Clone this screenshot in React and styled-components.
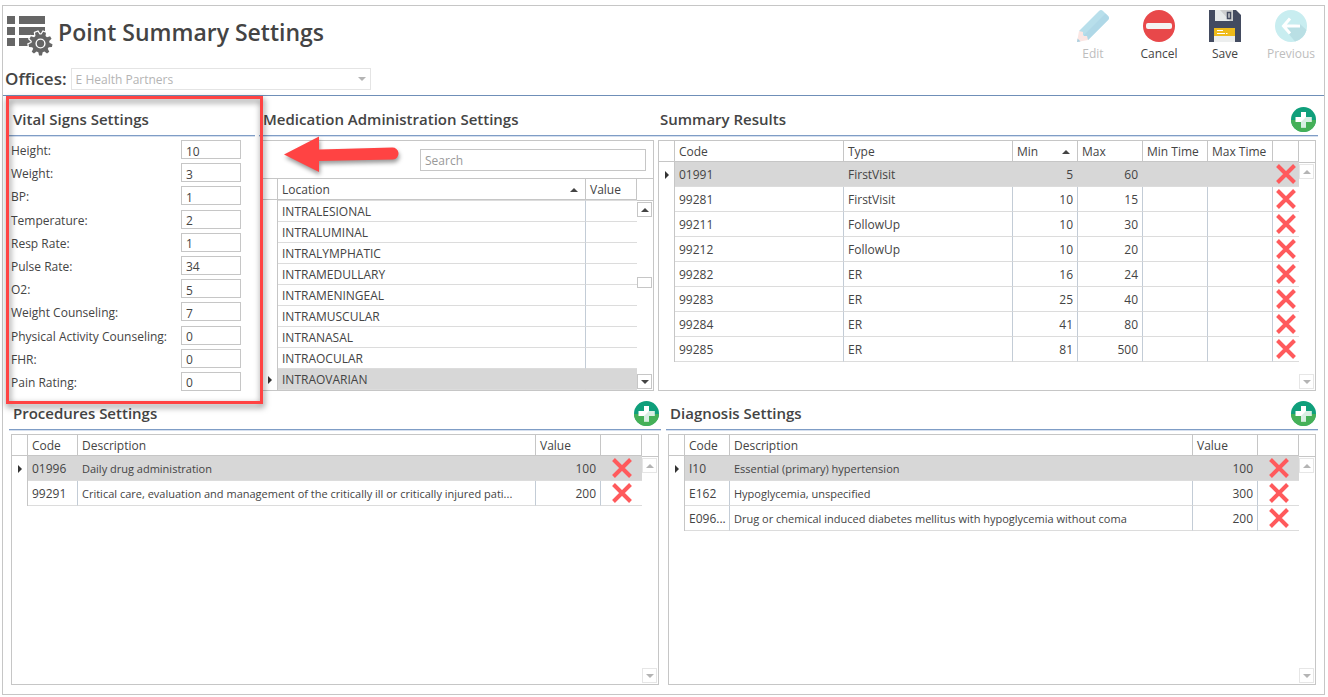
import React from "react"
import styled, { createGlobalStyle, css } from "styled-components"

const ink = "#444444"
const line = "#c6c6c6"
const rowLine = "#dcdcdc"
const cellLine = "#c3ccd6"
const selected = "#d7d7d7"
const blue = "#7f9dc6"
const red = "#ff4343"

const GlobalStyle = createGlobalStyle`
  * {
    box-sizing: border-box;
  }

  body {
    margin: 0;
    background: #ffffff;
    color: ${ink};
    font-family: "Open Sans", "Noto Sans", sans-serif;
    font-size: 12px;
    line-height: 16px;
  }

  button,
  input,
  select {
    font: inherit;
    color: inherit;
  }
`

const Page = styled.div`
  display: flex;
  min-height: 100vh;
  padding: 5px 3px 2px 2px;
`

const Frame = styled.div`
  flex: 1;
  min-width: 0;
  display: flex;
  flex-direction: column;
  border: 1px solid ${line};
`

const Header = styled.header`
  display: flex;
  justify-content: space-between;
  height: 90px;
  border-bottom: 1px solid #6f8fb8;
`

const Brand = styled.div`
  display: flex;
  align-items: flex-start;
  gap: 5px;
  height: 62px;
  padding: 10px 4px 0;
`

const Title = styled.h1`
  margin: 0;
  font-size: 23px;
  line-height: 32px;
  font-weight: 600;
`

const Offices = styled.div`
  display: flex;
  align-items: center;
  gap: 4px;
  padding-left: 2px;

  label {
    font-size: 17px;
    line-height: 22px;
    font-weight: 600;
  }
`

const SelectWrap = styled.div`
  display: flex;
  align-items: center;
  width: 300px;
  height: 22px;
  padding-right: 4px;
  border: 1px solid #e4e4e4;
  color: #b4b4b4;

  select {
    flex: 1;
    appearance: none;
    height: 20px;
    padding: 2px 4px 0;
    border: 0;
    background: none;
    opacity: 1;
  }
`

const Toolbar = styled.div`
  display: flex;
  padding-top: 4px;
`

const ToolButton = styled.button`
  display: flex;
  flex-direction: column;
  align-items: center;
  gap: 4px;
  width: 66px;
  height: 56px;
  padding: 0;
  border: 0;
  background: none;

  &:disabled {
    color: #bdbdbd;
  }
`

const Body = styled.main`
  flex: 1;
  display: flex;
  flex-direction: column;
  padding: 1px 6px 9px;
`

const TopRow = styled.div`
  display: grid;
  grid-template-columns: 250fr 397fr 662fr;
`

const BottomRow = styled.div`
  flex: 1;
  display: grid;
  grid-template-columns: 1fr 1fr;
  gap: 5px;
`

const Panel = styled.section`
  position: relative;
  display: flex;
  flex-direction: column;
  min-width: 0;
  margin-right: ${props => (props.$spaced ? "4px" : 0)};
`

const PanelHead = styled.div`
  display: flex;
  align-items: center;
  justify-content: space-between;
  height: 40px;
  margin-bottom: 3px;
  padding: 5px 2px 0 4px;
  border-bottom: 1px solid #d5dfee;
  box-shadow: inset 0 -1px 0 ${blue};

  h2 {
    margin: 0;
    font-size: 15px;
    line-height: 20px;
    font-weight: 600;
    white-space: nowrap;
  }
`

const IconButton = styled.button`
  display: flex;
  justify-content: center;
  align-items: center;
  padding: 0;
  border: 0;
  background: none;
`

const GridBox = styled.div`
  flex: 1;
  display: flex;
  flex-direction: column;
  margin: 0 2px;
  border: 1px solid ${line};
`

const GridBody = styled.div`
  flex: 1;
  display: flex;
`

const TableArea = styled.div`
  flex: 1;
  min-width: 0;
`

const Table = styled.table`
  width: 100%;
  table-layout: fixed;
  border-spacing: 0;
`

const Th = styled.th`
  width: ${props => (props.$width ? props.$width + "px" : "auto")};
  height: 21px;
  padding: 2px 4px 0;
  border-right: 1px solid ${line};
  border-bottom: 1px solid ${line};
  font-weight: 400;
  text-align: left;
  white-space: nowrap;
`

const ThLabel = styled.div`
  display: flex;
  align-items: center;
  justify-content: space-between;
  padding-right: 3px;
`

const Row = styled.tr`
  ${props =>
    props.$selected &&
    css`
      td:not(:first-child) {
        background: ${selected};
        border-right-color: ${selected};
      }
    `}
`

const Td = styled.td`
  height: ${props => (props.$dense ? "21px" : "25px")};
  padding: ${props => (props.$number ? "2px 4px 0" : "2px 0 0 4px")};
  border-right: 1px solid ${cellLine};
  border-bottom: 1px solid ${rowLine};
  font-size: ${props => (props.$small ? "11px" : "12px")};
  text-align: ${props => (props.$number ? "right" : "left")};
  overflow: hidden;
  text-overflow: ellipsis;
  white-space: nowrap;
`

const ActionCell = styled.td`
  padding: 0;
  border-bottom: 1px solid ${rowLine};

  button {
    width: 100%;
  }
`

const Marker = styled.td`
  padding: 0;
  border-right: 1px solid ${line};

  svg {
    display: block;
    margin: 0 auto;
  }
`

const DenseTable = styled(Table)`
  tbody tr:first-child td:not(:first-child) {
    height: 22px;
    border-top: 1px solid ${rowLine};
  }

  tbody td:last-child {
    border-right: 0;
  }
`

const Rail = styled.div`
  display: flex;
  flex-direction: column;
  align-items: flex-start;
  width: 16px;
  padding-bottom: 1px;

  &::before {
    content: "";
    width: 16px;
    height: 21px;
    margin-bottom: 1px;
    border-bottom: 1px solid ${line};
  }
`

const RailTrack = styled.div`
  flex: 1;
  display: flex;
  flex-direction: column;
`

const RailSpace = styled.div`
  flex: ${props => props.$grow};
`

const RailThumb = styled.div`
  width: 15px;
  height: 11px;
  border: 1px solid ${line};
  background: #ffffff;
`

const RailButton = styled(IconButton)`
  width: 15px;
  height: 15px;
  border: 1px solid ${line};
  background: #ffffff;

  &:disabled {
    border-color: #e6e6e6;
  }
`

const SearchBar = styled.div`
  display: flex;
  justify-content: flex-end;
  padding: 8px 7px 7px;
  border-bottom: 1px solid ${line};
`

const SearchInput = styled.input`
  width: 226px;
  height: 22px;
  padding: 1px 4px 0;
  border: 1px solid ${line};
  border-radius: 0;

  &::placeholder {
    color: #999999;
    opacity: 1;
  }
`

const VitalList = styled.div`
  flex: 1;
  display: flex;
  flex-direction: column;
  justify-content: space-between;
  padding: 0 14px 0 2px;
`

const VitalRow = styled.div`
  display: flex;
  align-items: center;
  justify-content: space-between;

  label {
    padding-top: 2px;
    line-height: 17px;
  }

  input {
    width: 60px;
    height: 19px;
    padding: 3px 4px 0;
    border: 1px solid ${line};
    border-radius: 0;
  }
`

const Highlight = styled.div`
  position: absolute;
  z-index: 2;
  inset: -1px -8px -13px -3px;
  border: 3px solid ${red};
  filter: drop-shadow(1px 3px 3px rgba(0, 0, 0, 0.55));
  pointer-events: none;
`

const Pointer = styled.svg`
  position: absolute;
  z-index: 2;
  top: 36px;
  left: 20px;
  filter: drop-shadow(1px 3px 2px rgba(0, 0, 0, 0.4));
  pointer-events: none;
`

// nine teeth, four points each
const gearPoints = Array.from({ length: 36 }, (_, i) => {
  const outer = i % 4 < 2
  const radius = outer ? 12 : 9
  const spread = outer ? 2 : 1
  const angle = ((i * 10 + 5 + (i % 2 ? spread : -spread)) * Math.PI) / 180
  return `${33.5 + radius * Math.cos(angle)},${27.5 + radius * Math.sin(angle)}`
}).join(" ")

const SettingsIcon = () => (
  <svg width="46" height="40" viewBox="0 0 46 40" fill="#666666" aria-hidden="true">
    <path d="M0 0h8v8H0zM12 0h26v8H12zM0 11h8v8H0zM12 11h26v8H12zM0 22h8v8H0zM12 22h13v8H12z" />
    <polygon points={gearPoints} stroke="#ffffff" strokeWidth="2.4" />
    <polygon points={gearPoints} />
    <circle cx="33.5" cy="27.5" r="4.4" fill="none" stroke="#ffffff" strokeWidth="1.4" />
  </svg>
)

const EditIcon = () => (
  <svg width="32" height="32" viewBox="0 0 32 32" aria-hidden="true">
    <path d="M2 21 22 1q2-2 4 0l5 5q2 2 0 4L11 30z" fill="#b8dfeb" />
    <path d="M6.5 25.5 28.5 3.5 31 6q2 2 0 4L11 30z" fill="#afd8e7" />
    <path d="M2 21 0 32l11-2-1-4-4 0 0-4z" fill="#fbe6e3" />
    <path d="M0 32l.6-3.5L3.5 31.400z" fill="#a9cfe0" />
  </svg>
)

const CancelIcon = () => (
  <svg width="32" height="32" viewBox="0 0 32 32" aria-hidden="true">
    <circle cx="16" cy="16" r="16" fill="#e8484a" />
    <rect x="3" y="13" width="26" height="6" rx="2" fill="#f4f4f4" />
  </svg>
)

const SaveIcon = () => (
  <svg width="32" height="32" viewBox="0 0 32 32" aria-hidden="true">
    <path d="M0 0h27l5 5v27H0z" fill="#434b60" />
    <path d="M6 0h18v11H6z" fill="#e6eaea" />
    <path d="M11 0h13v11H21z" fill="#cdcfcf" />
    <rect x="18.5" y="2.5" width="3" height="6" fill="#cdcfcf" stroke="#434b60" strokeWidth="1.5" />
    <path d="M5 18h21v8H5z" fill="#efbb1a" />
    <path d="M5 26h21v6H5z" fill="#eceeee" />
    <path d="M8 20.5h6M8 23.5h8M17 23.5h1.5" stroke="#ffffff" />
  </svg>
)

const PreviousIcon = () => (
  <svg width="32" height="32" viewBox="0 0 32 32" aria-hidden="true">
    <circle cx="16" cy="16" r="16" fill="#c8edf0" />
    <path d="M8 17 20 31.5A16 16 0 0 0 31.5 20L25 14z" fill="#b9dfe4" />
    <path d="M15 8.5 8.5 16l6.5 7.5M9 16h16" fill="none" stroke="#ffffff" strokeWidth="3" />
  </svg>
)

const PlusIcon = () => (
  <svg width="25" height="25" viewBox="0 0 25 25" aria-hidden="true">
    <circle cx="12.5" cy="12.5" r="12.5" fill="#0f9f7b" />
    <path d="M0 13a12.5 12 0 0 0 25 0z" fill="#45b058" />
    <path d="M10 5h5v5h5.5v5H15v5.5h-5V15H4.500v-5H10z" fill="#ffffff" />
    <path d="M15 10h5.5v5H15v5.5h-5V15z" fill="#d8eee3" />
  </svg>
)

const DeleteIcon = () => (
  <svg width="20" height="20" viewBox="0 0 20 20" aria-hidden="true">
    <path d="M1.5 1.5l17 17M18.5 1.5l-17 17" stroke="#ff5a5c" strokeWidth="4" />
  </svg>
)

const Triangle = ({ down, color = ink }) => (
  <svg width="8" height="4" viewBox="0 0 8 4" fill={color} aria-hidden="true">
    <path d={down ? "M0 0h8L4 4z" : "M0 4h8L4 0z"} />
  </svg>
)

const MarkerIcon = () => (
  <svg width="4" height="8" viewBox="0 0 4 8" fill="#333333" aria-hidden="true">
    <path d="M0 0l4 4-4 4z" />
  </svg>
)

const vitals = [
  ["Height", 10],
  ["Weight", 3],
  ["BP", 1],
  ["Temperature", 2],
  ["Resp Rate", 1],
  ["Pulse Rate", 34],
  ["O2", 5],
  ["Weight Counseling", 7],
  ["Physical Activity Counseling", 0],
  ["FHR", 0],
  ["Pain Rating", 0]
]

const locations = [
  "INTRALESIONAL",
  "INTRALUMINAL",
  "INTRALYMPHATIC",
  "INTRAMEDULLARY",
  "INTRAMENINGEAL",
  "INTRAMUSCULAR",
  "INTRANASAL",
  "INTRAOCULAR",
  "INTRAOVARIAN"
]

const locationColumns = [
  { label: "Location", sorted: true },
  { label: "Value", width: 51 }
]

const resultColumns = [
  { label: "Code" },
  { label: "Type" },
  { label: "Min", width: 65, number: true, sorted: true },
  { label: "Max", width: 65, number: true },
  { label: "Min Time", width: 65 },
  { label: "Max Time", width: 65 }
]

const results = [
  ["01991", "FirstVisit", 5, 60, "", ""],
  ["99281", "FirstVisit", 10, 15, "", ""],
  ["99211", "FollowUp", 10, 30, "", ""],
  ["99212", "FollowUp", 10, 20, "", ""],
  ["99282", "ER", 16, 24, "", ""],
  ["99283", "ER", 25, 40, "", ""],
  ["99284", "ER", 41, 80, "", ""],
  ["99285", "ER", 81, 500, "", ""]
]

const codeColumns = codeWidth => [
  { label: "Code", width: codeWidth },
  { label: "Description", small: true },
  { label: "Value", width: 65, number: true }
]

const procedures = [
  ["01996", "Daily drug administration", 100],
  ["99291", "Critical care, evaluation and management of the critically ill or critically injured pati...", 200]
]

const diagnoses = [
  ["I10", "Essential (primary) hypertension", 100],
  ["E162", "Hypoglycemia, unspecified", 300],
  ["E096...", "Drug or chemical induced diabetes mellitus with hypoglycemia without coma", 200]
]

const ScrollRail = ({ active }) => (
  <Rail>
    <RailButton disabled={!active} aria-label="Scroll up">
      <Triangle color={active ? ink : "#b4b4b4"} />
    </RailButton>
    <RailTrack>
      {active && (
        <>
          <RailSpace $grow={41} />
          <RailThumb />
          <RailSpace $grow={59} />
        </>
      )}
    </RailTrack>
    <RailButton disabled={!active} aria-label="Scroll down">
      <Triangle down color={active ? ink : "#b4b4b4"} />
    </RailButton>
  </Rail>
)

const DataGrid = ({ columns, rows, current = 0, deleteWidth, dense, scrolls }) => {
  const GridTable = dense ? DenseTable : Table

  return (
    <GridBody>
      <TableArea>
        <GridTable>
          <thead>
            <tr>
              <Th $width={16} />
              {columns.map(column => (
                <Th key={column.label} $width={column.width}>
                  <ThLabel>
                    {column.label}
                    {column.sorted && <Triangle />}
                  </ThLabel>
                </Th>
              ))}
              {deleteWidth && <Th $width={deleteWidth} />}
            </tr>
          </thead>
          <tbody>
            {rows.map((row, index) => (
              <Row key={row[0]} $selected={index === current}>
                <Marker>{index === current && <MarkerIcon />}</Marker>
                {row.map((value, i) => (
                  <Td key={i} $dense={dense} $number={columns[i].number} $small={columns[i].small}>
                    {value}
                  </Td>
                ))}
                {deleteWidth && (
                  <ActionCell>
                    <IconButton aria-label={`Delete ${row[0]}`}>
                      <DeleteIcon />
                    </IconButton>
                  </ActionCell>
                )}
              </Row>
            ))}
          </tbody>
        </GridTable>
      </TableArea>
      <ScrollRail active={scrolls} />
    </GridBody>
  )
}

const PanelHeading = ({ title, addable }) => (
  <PanelHead>
    <h2>{title}</h2>
    {addable && (
      <IconButton aria-label="Add">
        <PlusIcon />
      </IconButton>
    )}
  </PanelHead>
)

export default function App() {
  return (
    <Page>
      <GlobalStyle />
      <Frame>
        <Header>
          <div>
            <Brand>
              <SettingsIcon />
              <Title>Point Summary Settings</Title>
            </Brand>
            <Offices>
              <label htmlFor="office">Offices:</label>
              <SelectWrap>
                <select id="office" disabled>
                  <option>E Health Partners</option>
                </select>
                <Triangle down color="#b4b4b4" />
              </SelectWrap>
            </Offices>
          </div>
          <Toolbar>
            <ToolButton disabled>
              <EditIcon />
              Edit
            </ToolButton>
            <ToolButton>
              <CancelIcon />
              Cancel
            </ToolButton>
            <ToolButton>
              <SaveIcon />
              Save
            </ToolButton>
            <ToolButton disabled>
              <PreviousIcon />
              Previous
            </ToolButton>
          </Toolbar>
        </Header>
        <Body>
          <TopRow>
            <Panel $spaced>
              <PanelHeading title="Vital Signs Settings" />
              <VitalList>
                {vitals.map(([label, value]) => (
                  <VitalRow key={label}>
                    <label htmlFor={label}>{label}:</label>
                    <input id={label} defaultValue={value} />
                  </VitalRow>
                ))}
              </VitalList>
              <Highlight />
            </Panel>
            <Panel>
              <PanelHeading title="Medication Administration Settings" />
              <GridBox>
                <SearchBar>
                  <SearchInput type="search" placeholder="Search" aria-label="Search" />
                </SearchBar>
                <DataGrid
                  columns={locationColumns}
                  rows={locations.map(name => [name, ""])}
                  current={8}
                  dense
                  scrolls
                />
              </GridBox>
              <Pointer width="125" height="48" viewBox="0 0 125 48" aria-hidden="true">
                <path d="M5 21.5 40 3.5v13L113 14.5a6 6 0 0 1 1 12L40 28v11z" fill={red} />
              </Pointer>
            </Panel>
            <Panel>
              <PanelHeading title="Summary Results" addable />
              <GridBox>
                <DataGrid columns={resultColumns} rows={results} deleteWidth={26} />
              </GridBox>
            </Panel>
          </TopRow>
          <BottomRow>
            <Panel>
              <PanelHeading title="Procedures Settings" addable />
              <GridBox>
                <DataGrid columns={codeColumns(50)} rows={procedures} deleteWidth={41} />
              </GridBox>
            </Panel>
            <Panel>
              <PanelHeading title="Diagnosis Settings" addable />
              <GridBox>
                <DataGrid columns={codeColumns(45)} rows={diagnoses} deleteWidth={41} />
              </GridBox>
            </Panel>
          </BottomRow>
        </Body>
      </Frame>
    </Page>
  )
}
